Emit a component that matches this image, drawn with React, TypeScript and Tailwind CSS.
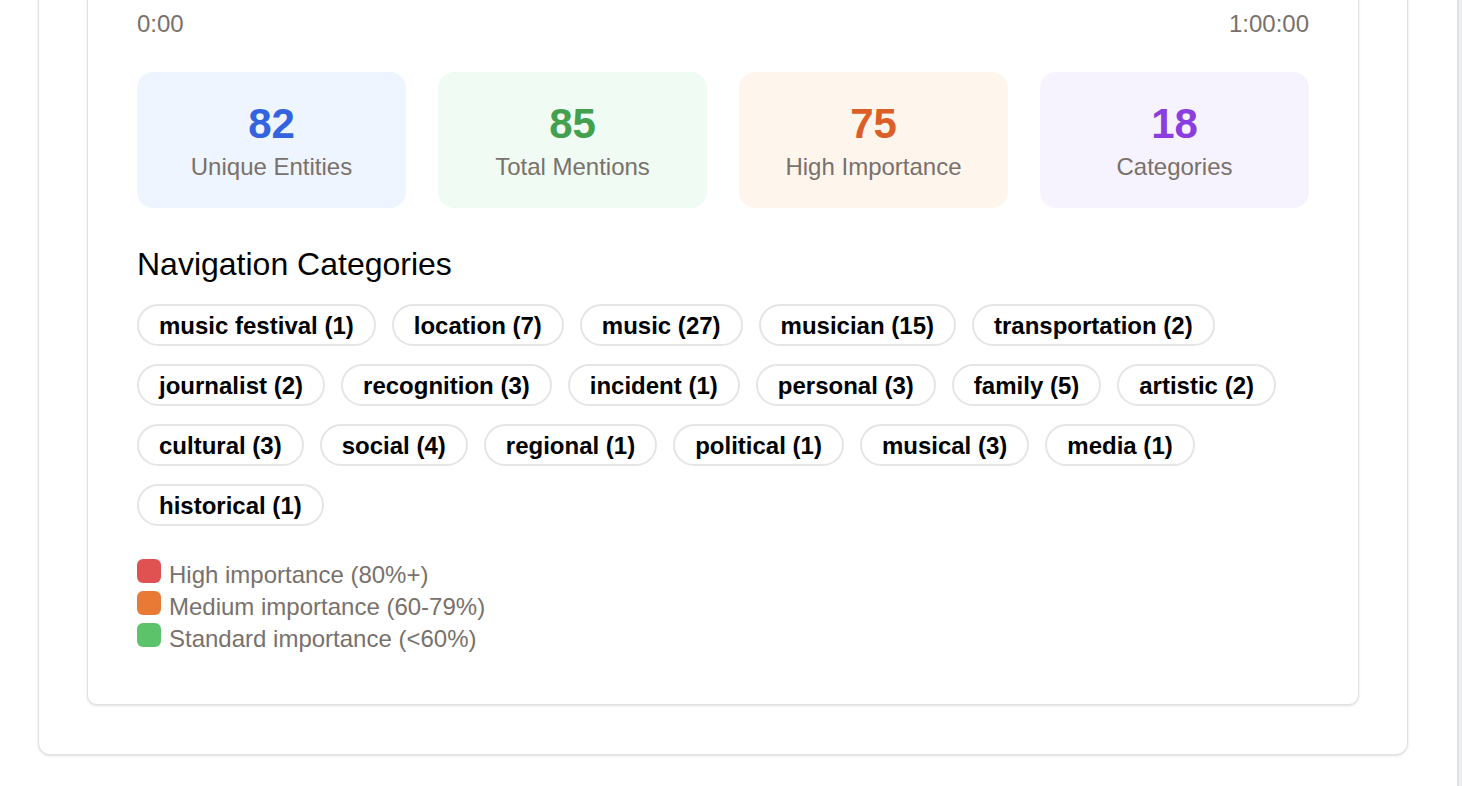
const stats = [
  { value: 82, label: 'Unique Entities', box: 'bg-[#eef5fe]', num: 'text-[#3463e0]' },
  { value: 85, label: 'Total Mentions', box: 'bg-[#f0fbf3]', num: 'text-[#43a04f]' },
  { value: 75, label: 'High Importance', box: 'bg-[#fef6ec]', num: 'text-[#dc5f27]' },
  { value: 18, label: 'Categories', box: 'bg-[#f6f3fe]', num: 'text-[#8a3ee0]' },
];

const categories = [
  ['music festival', 1],
  ['location', 7],
  ['music', 27],
  ['musician', 15],
  ['transportation', 2],
  ['journalist', 2],
  ['recognition', 3],
  ['incident', 1],
  ['personal', 3],
  ['family', 5],
  ['artistic', 2],
  ['cultural', 3],
  ['social', 4],
  ['regional', 1],
  ['political', 1],
  ['musical', 3],
  ['media', 1],
  ['historical', 1],
] as const;

const legend = [
  { color: 'bg-[#e05252]', label: 'High importance (80%+)' },
  { color: 'bg-[#e87a35]', label: 'Medium importance (60-79%)' },
  { color: 'bg-[#5cc36a]', label: 'Standard importance (<60%)' },
];

export default function App() {
  return (
    <div className="flex h-[786px] overflow-hidden bg-white font-['Liberation_Sans',Arial,sans-serif]">
      <div className="flex-1 pl-[38px]">
        {/* scrolled view: card tops sit above the viewport */}
        <div className="-mt-[86px] w-[1370px] rounded-xl border border-[#e2e2e2] bg-white px-12 pb-[49px] pt-[44px] shadow-sm">
          <div className="rounded-[10px] border border-[#e2e2e2] bg-white pb-[49px] pl-[49px] pr-[48px] pt-[46px] shadow-sm">
            <div className="flex justify-between pr-px text-[24px] leading-[36px] text-[#78716c]">
              <span>0:00</span>
              <span>1:00:00</span>
            </div>

            <div className="mt-[30px] grid grid-cols-4 gap-8 pr-px">
              {stats.map((s) => (
                <div key={s.label} className={`flex h-[136px] flex-col items-center rounded-2xl pt-[27px] ${s.box}`}>
                  <div className={`text-[42px] font-bold leading-[50px] ${s.num}`}>{s.value}</div>
                  <div className="text-[24px] leading-[36px] text-[#78716c]">{s.label}</div>
                </div>
              ))}
            </div>

            <h3 className="mt-[37px] text-[32px] leading-[38px] text-black">Navigation Categories</h3>

            <div className="mt-[21px] flex flex-wrap gap-x-4 gap-y-[18px]">
              {categories.map(([name, count]) => (
                <button
                  key={name}
                  className="rounded-full border-2 border-[#e5e5e5] bg-white px-[20px] pb-[4px] pt-[6px] text-[24px] font-bold leading-[28px] text-black"
                >
                  {name} ({count})
                </button>
              ))}
            </div>

            <div className="mt-[33px] flex flex-col">
              {legend.map((l) => (
                <div key={l.label} className="flex items-start gap-2 text-[24px] leading-[32px] text-[#78716c]">
                  <span className={`h-6 w-6 rounded-md ${l.color}`} />
                  <span>{l.label}</span>
                </div>
              ))}
            </div>
          </div>
        </div>
      </div>
      <div className="w-[5px] border-l-2 border-[#e2e2e2] bg-[#eef0f4]" />
    </div>
  );
}
